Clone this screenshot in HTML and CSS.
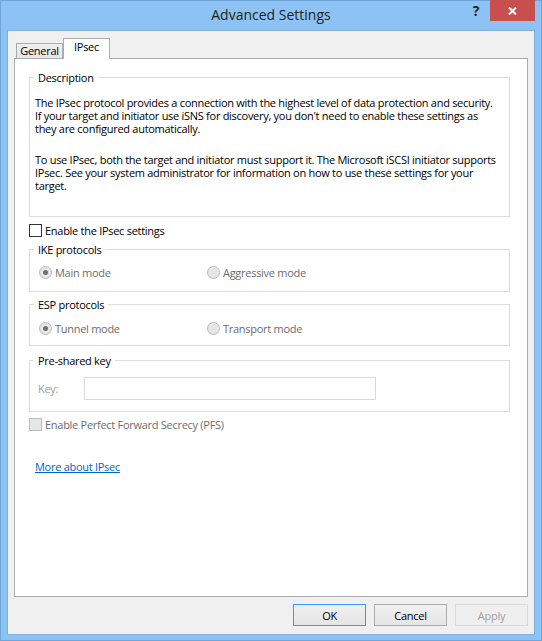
FILE: index.html
```html
<!DOCTYPE html>
<html lang="en">
<head>
  <meta charset="UTF-8" />
  <title>Advanced Settings</title>
  <link rel="stylesheet" href="styles.css">
</head>
<body>
  <div class="window">
    <div class="titlebar">
      <div></div>
      <div class="title">Advanced Settings</div>
      <div class="caption">
        <span class="help">?</span>
        <span class="close">
          <svg width="9" height="8" viewBox="0 0 9 8"><path d="M1 0.5 L8 7.5 M8 0.5 L1 7.5" stroke="#fff" stroke-width="2" fill="none"/></svg>
        </span>
      </div>
    </div>

    <div class="client">
      <div class="tabs">
        <div class="tab">General</div>
        <div class="tab active">IPsec</div>
      </div>

      <div class="panel">
        <fieldset class="group desc">
          <legend>Description</legend>
          <p>The IPsec protocol provides a connection with the highest level of data protection and security.<br>
          If your target and initiator use iSNS for discovery, you don't need to enable these settings as<br>
          they are configured automatically.</p>
          <p>To use IPsec, both the target and initiator must support it. The Microsoft iSCSI initiator supports<br>
          IPsec. See your system administrator for information on how to use these settings for your<br>
          target.</p>
        </fieldset>

        <label class="check check-ipsec"><span class="box"></span>Enable the IPsec settings</label>

        <fieldset class="group ike">
          <legend>IKE protocols</legend>
          <div class="radios">
            <span class="radio"><span class="dot on"></span>Main mode</span>
            <span class="radio"><span class="dot"></span>Aggressive mode</span>
          </div>
        </fieldset>

        <fieldset class="group esp">
          <legend>ESP protocols</legend>
          <div class="radios">
            <span class="radio"><span class="dot on"></span>Tunnel mode</span>
            <span class="radio"><span class="dot"></span>Transport mode</span>
          </div>
        </fieldset>

        <fieldset class="group psk">
          <legend>Pre-shared key</legend>
          <div class="key-row">
            <span class="key-label">Key:</span>
            <span class="key-input"></span>
          </div>
        </fieldset>

        <label class="check check-pfs disabled"><span class="box"></span>Enable Perfect Forward Secrecy (PFS)</label>

        <a class="more" href="#">More about IPsec</a>
      </div>

      <div class="buttons">
        <button class="btn default">OK</button>
        <button class="btn">Cancel</button>
        <button class="btn disabled">Apply</button>
      </div>
    </div>
  </div>
</body>
</html>
```

FILE: styles.css
```css
body {
  margin: 0;
  background: #8cc3f4;
  font-family: 'Open Sans', sans-serif;
  font-size: 11px;
  letter-spacing: -0.28px;
  color: #000;
}

.window {
  width: 542px;
  height: 641px;
  box-shadow: inset 0 0 0 1px #6fa6d9;
  overflow: hidden;
}

/* title bar */
.titlebar {
  height: 30px;
  display: grid;
  grid-template-columns: 1fr auto 1fr;
  align-items: start;
}

.title {
  font-size: 14px;
  line-height: 30px;
  letter-spacing: 0;
  color: #222;
}

.caption {
  display: flex;
  justify-content: flex-end;
  padding-right: 7px;
}

.help {
  width: 20px;
  margin-right: 4px;
  text-align: center;
  font-weight: bold;
  font-size: 14px;
  line-height: 22px;
  color: #222;
}

.close {
  width: 45px;
  height: 21px;
  background: #c7504f;
  display: flex;
  align-items: center;
  justify-content: center;
}

/* client area */
.client {
  box-sizing: border-box;
  height: 605px;
  margin: 0 7px;
  background: #f0f0f0;
  border: 1px solid #7fb0de;
}

.tabs {
  display: flex;
  align-items: flex-end;
  padding: 7px 0 0 8px;
  margin-bottom: -1px;
  position: relative;
  z-index: 1;
}

.tab {
  box-sizing: border-box;
  width: 47px;
  height: 15px;
  margin-bottom: 1px;
  border: 1px solid #acacac;
  border-bottom: none;
  background: linear-gradient(#f0f0f0, #e5e5e5);
  text-align: center;
  line-height: 14px;
}

.tab.active {
  height: 21px;
  margin-bottom: 0;
  background: #fff;
  padding-top: 1px;
}

.panel {
  box-sizing: border-box;
  height: 539px;
  margin: 0 6px;
  background: #fff;
  border: 1px solid #acacac;
  display: flex;
  flex-direction: column;
  align-items: flex-start;
}

/* group boxes */
.group {
  box-sizing: border-box;
  width: 481px;
  margin: 0 0 0 14px;
  border: 1px solid #dcdcdc;
  padding: 0 5px;
  min-inline-size: 0;
}

.group legend {
  padding: 0 4px;
  margin-left: -1px;
  line-height: 13px;
}

.desc {
  margin-top: 12px;
  padding-top: 12px;
  padding-bottom: 24px;
}

.desc p {
  margin: 0;
  line-height: 13px;
  white-space: nowrap;
}

.desc p + p {
  margin-top: 18px;
}

.ike {
  margin-top: 6px;
  padding-top: 10px;
  padding-bottom: 12px;
}

.esp {
  margin-top: 6px;
  padding-top: 11px;
  padding-bottom: 10px;
}

.psk {
  margin-top: 8px;
  padding-top: 10px;
  padding-bottom: 11px;
}

/* checkboxes */
.check {
  display: flex;
  align-items: center;
  height: 13px;
  margin-left: 14px;
  line-height: 13px;
}

.check .box {
  box-sizing: border-box;
  width: 13px;
  height: 13px;
  margin-right: 3px;
  border: 1px solid #333;
  background: #fff;
}

.check-ipsec {
  margin-top: 7px;
}

.check-pfs {
  margin-top: 6px;
}

.check.disabled {
  color: #6d6d6d;
}

.check.disabled .box {
  border-color: #bcbcbc;
  background: #e6e6e6;
}

/* radio buttons */
.radios {
  display: grid;
  grid-template-columns: 168px auto;
  padding-left: 4px;
}

.radio {
  display: flex;
  align-items: center;
  height: 13px;
  color: #6d6d6d;
}

.dot {
  box-sizing: border-box;
  width: 13px;
  height: 13px;
  margin-right: 3px;
  border: 1px solid #bcbcbc;
  border-radius: 50%;
  background: #e6e6e6;
  display: flex;
  align-items: center;
  justify-content: center;
}

.dot.on::after {
  content: '';
  width: 5px;
  height: 5px;
  border-radius: 50%;
  background: #707070;
}

/* pre-shared key */
.key-row {
  display: flex;
  align-items: center;
}

.key-label {
  width: 46px;
  margin-left: 3px;
  color: #a0a0a0;
}

.key-input {
  box-sizing: border-box;
  width: 292px;
  height: 23px;
  border: 1px solid #d9d9d9;
  background: #fff;
}

.more {
  margin: 29px 0 0 20px;
  line-height: 13px;
  color: #0066cc;
  text-decoration: underline;
}

/* dialog buttons */
.buttons {
  display: flex;
  justify-content: flex-end;
  gap: 8px;
  margin: 7px 6px 0 0;
}

.btn {
  box-sizing: border-box;
  width: 73px;
  height: 22px;
  padding: 0;
  border: 1px solid #acacac;
  background: linear-gradient(#f0f0f0, #e5e5e5);
  font-family: 'Open Sans', sans-serif;
  font-size: 11px;
  letter-spacing: -0.28px;
  color: #000;
}

.btn.default {
  border-color: #3399ff;
}

.btn.disabled {
  border-color: #d9d9d9;
  background: #efefef;
  color: #a0a0a0;
}
```
